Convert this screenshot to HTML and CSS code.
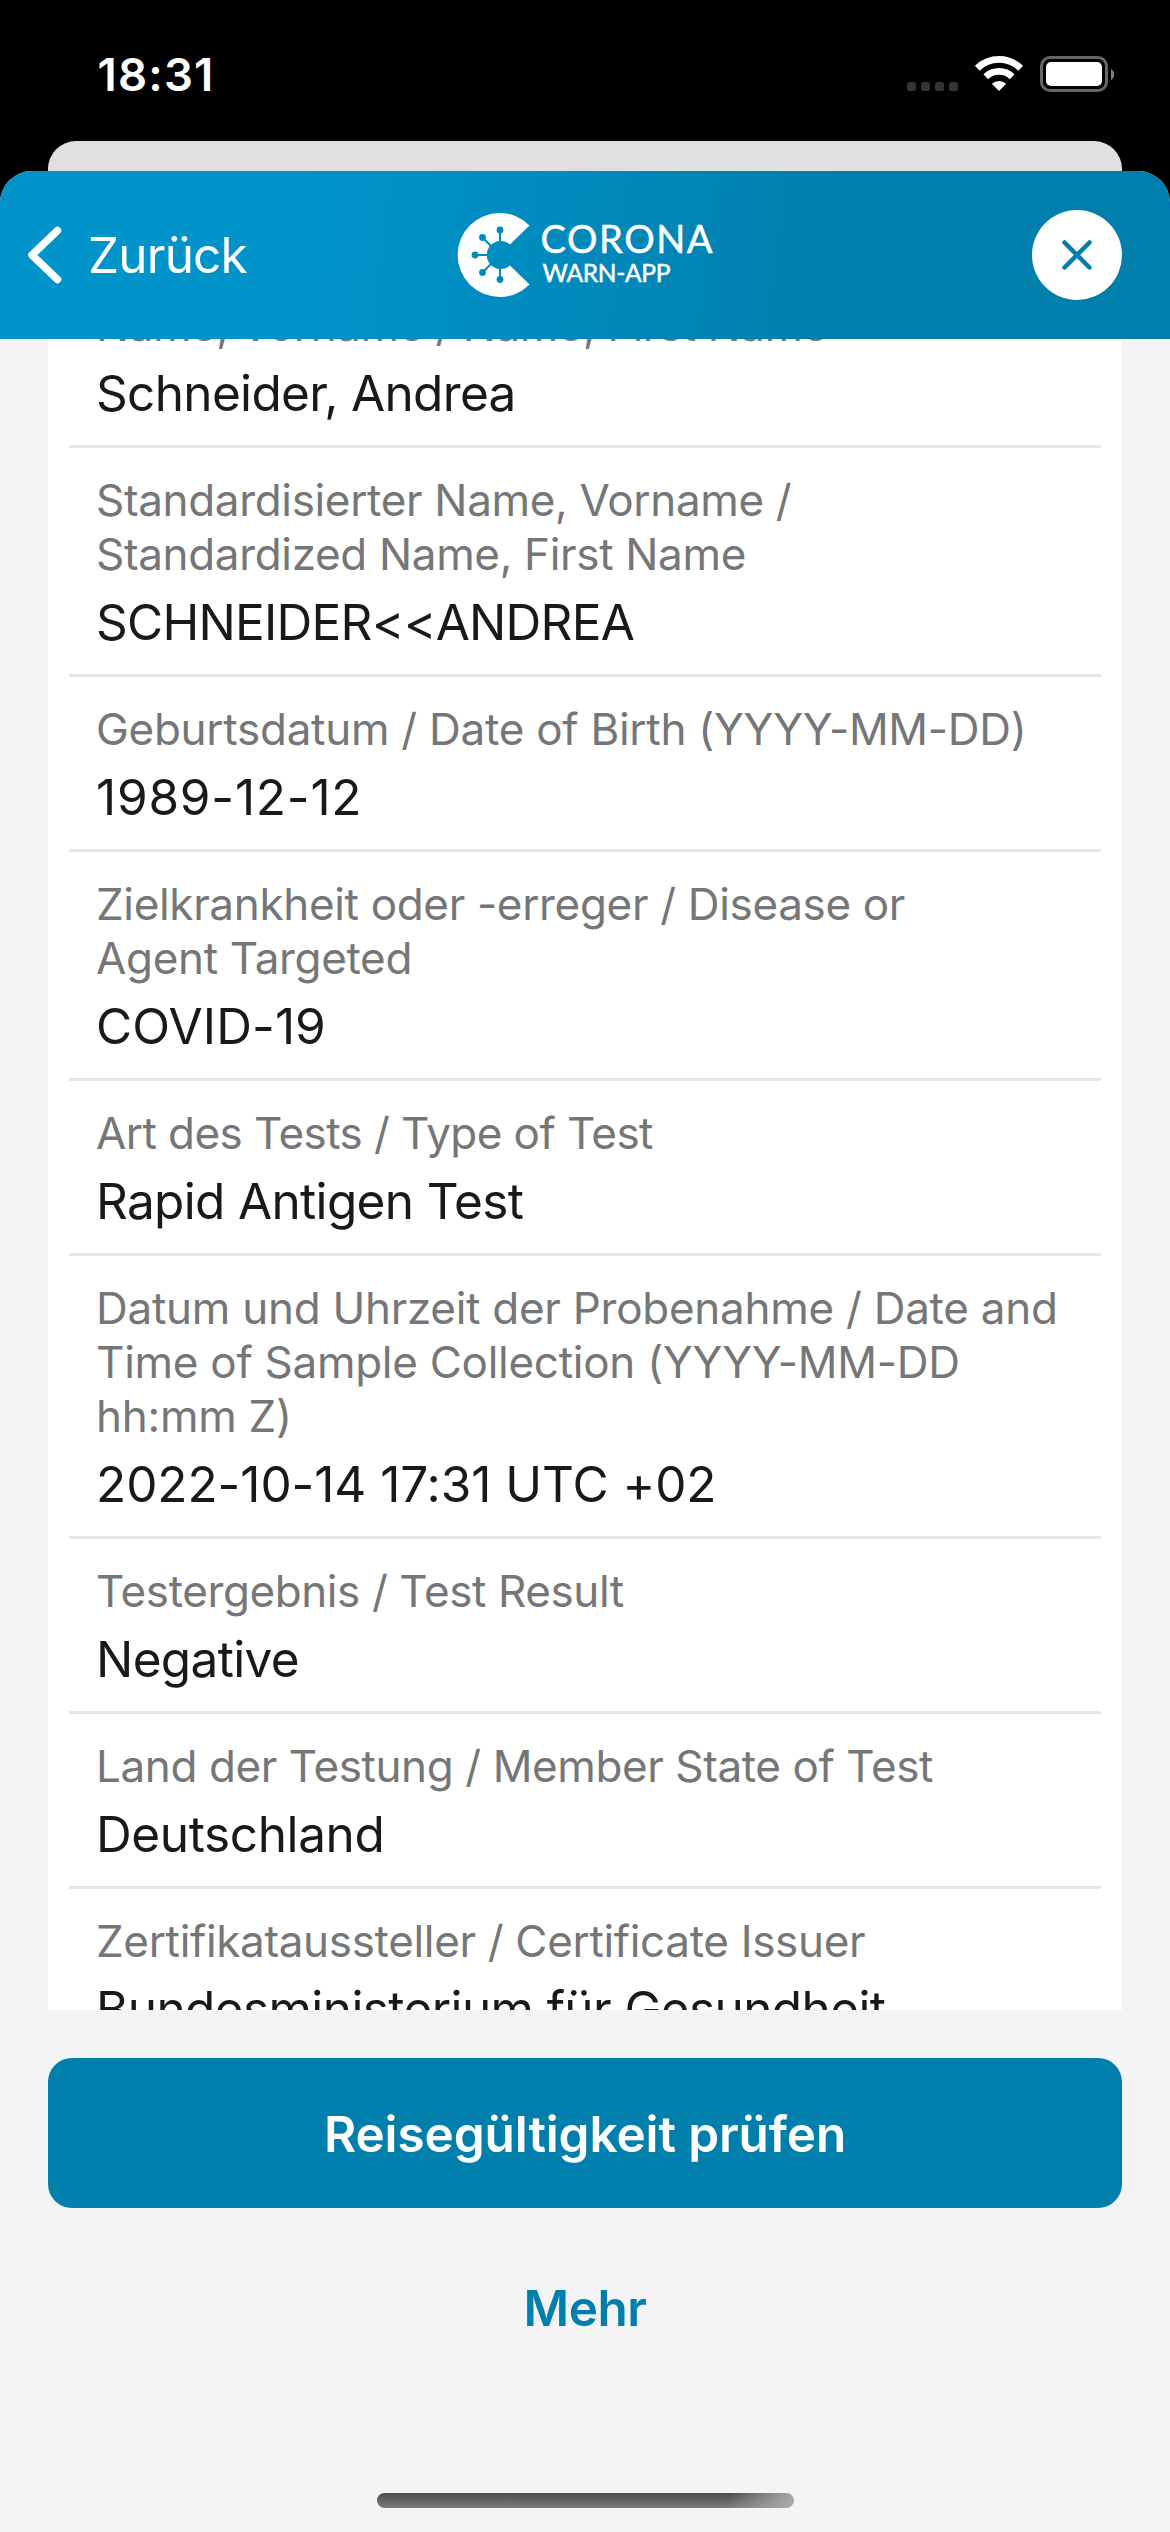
FILE: index.html
```html
<!DOCTYPE html>
<html lang="de">
<head>
<meta charset="utf-8">
<title>Corona-Warn-App</title>
<link rel="stylesheet" href="styles.css">
</head>
<body>
<div class="screen">
  <header class="status-bar">
    <span class="time">18:31</span>
    <svg class="status-icons" width="210" height="40" viewBox="0 0 210 40">
      <g fill="#323333"><rect x="2" y="28" width="9" height="9" rx="2.6"/><rect x="16" y="28" width="9" height="9" rx="2.6"/><rect x="30" y="28" width="9" height="9" rx="2.6"/><rect x="44" y="28" width="9" height="9" rx="2.6"/></g>
      <g fill="none" stroke="#fff" stroke-width="6.8">
        <path d="M72.3 14.3a31 31 0 0 1 43.4 0"/>
        <path d="M80.8 22.8a19 19 0 0 1 26.4 0"/>
      </g>
      <path fill="#fff" d="M94 37l-7.2-7.3a10.6 10.6 0 0 1 14.4 0z"/>
      <rect x="136.5" y="3.5" width="65" height="33" rx="8.5" fill="none" stroke="#666" stroke-width="3"/>
      <rect x="141" y="8" width="56" height="24" rx="5" fill="#fff"/>
      <path fill="#808080" d="M206 15a6.4 6.4 0 0 1 0 11z"/>
    </svg>
  </header>

  <div class="sheet-behind"></div>

  <main class="sheet">
    <nav class="nav-bar">
      <a class="back">
        <svg width="34" height="58" viewBox="0 0 34 58"><path d="M29.5 4.5L4 29l25.5 24.5" fill="none" stroke="#fff" stroke-width="7.5" stroke-linecap="round" stroke-linejoin="round"/></svg>
        <span>Zurück</span>
      </a>
      <svg class="logo" width="256" height="84" viewBox="0 0 256 84">
        <path fill="#fff" d="M71.5 12.5A42 42 0 1 0 71.5 71.5L52 52.5A14 14 0 1 1 52 31.5z"/>
        <g stroke="#008bbe" stroke-width="2"><path d="M42 17v12M24.500 24.500l8.500 8.500M17 42h12M24.500 59.500l8.500-8.500M42 67v-12"/></g>
        <g fill="#008bbe"><circle cx="42" cy="17" r="3.400"/><circle cx="24.500" cy="24.500" r="3.400"/><circle cx="17" cy="42" r="3.400"/><circle cx="24.500" cy="59.500" r="3.400"/><circle cx="42" cy="66.500" r="3.400"/></g>
        <text class="logo-name" x="82.500" y="40.200" textLength="172">CORONA</text>
        <text class="logo-sub" x="84.500" y="68.700" textLength="128">WARN-APP</text>
      </svg>
      <button class="close" aria-label="Schließen">
        <svg width="30" height="30" viewBox="0 0 30 30"><path d="M2.500 2.500l25 25M27.500 2.500l-25 25" stroke="#007fad" stroke-width="4.500" stroke-linecap="round"/></svg>
      </button>
    </nav>

    <section class="content">
      <dl class="details">
        <div class="row name"><dt>Name, Vorname / Name, First Name</dt><dd>Schneider, Andrea</dd></div>
        <div class="row std-name"><dt>Standardisierter Name, Vorname /<br>Standardized Name, First Name</dt><dd>SCHNEIDER&lt;&lt;ANDREA</dd></div>
        <div class="row birth"><dt>Geburtsdatum / Date of Birth (YYYY-MM-DD)</dt><dd>1989-12-12</dd></div>
        <div class="row disease"><dt>Zielkrankheit oder -erreger / Disease or<br>Agent Targeted</dt><dd>COVID-19</dd></div>
        <div class="row type"><dt>Art des Tests / Type of Test</dt><dd>Rapid Antigen Test</dd></div>
        <div class="row sample"><dt>Datum und Uhrzeit der Probenahme / Date and<br>Time of Sample Collection (YYYY-MM-DD<br>hh:mm Z)</dt><dd>2022-10-14 17:31 UTC +02</dd></div>
        <div class="row result"><dt>Testergebnis / Test Result</dt><dd>Negative</dd></div>
        <div class="row country"><dt>Land der Testung / Member State of Test</dt><dd>Deutschland</dd></div>
        <div class="row issuer"><dt>Zertifikataussteller / Certificate Issuer</dt><dd>Bundesministerium für Gesundheit</dd></div>
      </dl>
    </section>

    <footer class="actions">
      <button class="btn primary">Reisegültigkeit prüfen</button>
      <button class="btn plain">Mehr</button>
      <div class="home-indicator"></div>
    </footer>
  </main>
</div>
</body>
</html>
```
FILE: styles.css
```css
* { box-sizing: border-box; }

body {
  margin: 0;
  background: #000;
  font-family: Inter, "Liberation Sans", sans-serif;
}

.screen {
  display: flex;
  flex-direction: column;
  width: 1170px;
  height: 2532px;
  overflow: hidden;
  background: #000;
}

/* Status bar */
.status-bar {
  display: flex;
  flex: none;
  justify-content: space-between;
  align-items: flex-start;
  height: 141px;
  padding: 46px 55px 0 97.500px;
}
.time {
  color: #fff;
  font-size: 45.500px;
  font-weight: 600;
  line-height: 57px;
  letter-spacing: 1.200px;
}
.status-icons { margin-top: 8px; }

/* Stacked sheets */
.sheet-behind {
  flex: none;
  height: 30px;
  margin: 0 48px;
  border-radius: 28px 28px 0 0;
  background: #e0e0e0;
}
.sheet {
  display: flex;
  flex: 1;
  flex-direction: column;
  min-height: 0;
  border-radius: 32px 32px 0 0;
  background: #f4f4f4;
  overflow: hidden;
}

/* Navigation bar */
.nav-bar {
  display: grid;
  flex: none;
  grid-template-columns: 1fr 256px 1fr;
  align-items: center;
  height: 168px;
  padding: 0 48px 0 28px;
  background: linear-gradient(97deg, #0094cb 26%, #007fad 72%);
}
.back {
  display: flex;
  align-items: center;
  gap: 26px;
  color: #fff;
  font-size: 49.500px;
  letter-spacing: -.8px;
}
.logo { margin-left: 11px; overflow: visible; }
.logo text {
  fill: #fff;
  stroke: #fff;
  stroke-width: .5px;
  font-family: Lato, sans-serif;
}
.logo-name { font-size: 38px; }
.logo-sub { font-size: 24.500px; }
.close {
  display: flex;
  justify-content: center;
  align-items: center;
  justify-self: end;
  width: 90px;
  height: 90px;
  padding: 0;
  border: 0;
  border-radius: 50%;
  background: #fff;
}

/* Certificate details */
.content {
  flex: none;
  height: 1671px;
  margin: 0 48px;
  background: #fff;
  overflow: hidden;
}
.details { margin: -66px 21px 0; }
.row {
  padding: 25px 27px 21px;
  border-bottom: 3px solid #e6e6e6;
  white-space: nowrap;
}
dt {
  color: #757677;
  font-size: 44px;
  line-height: 54px;
  letter-spacing: -.33px;
}
dd {
  margin: 11px 0 0;
  color: #17191a;
  font-size: 49.500px;
  line-height: 61px;
  letter-spacing: -.66px;
}
.name dt { letter-spacing: -.47px; }
.std-name dd { letter-spacing: -.75px; }
.birth dt, .sample dt { letter-spacing: -.27px; }
.birth dd { letter-spacing: .8px; }
.disease dd { letter-spacing: .1px; }
.type dt { letter-spacing: -.57px; }
.sample dd { letter-spacing: -.05px; }
.result dt, .country dt { letter-spacing: -.4px; }
.country dd { letter-spacing: -.38px; }
.issuer dd { letter-spacing: -.6px; }

/* Footer */
.actions {
  display: flex;
  flex: 1;
  flex-direction: column;
  align-items: stretch;
  padding: 48px 48px 24px;
}
.btn {
  height: 150px;
  padding: 1px 0 0;
  border: 0;
  border-radius: 24px;
  font: 600 49.500px/60px Inter, sans-serif;
  letter-spacing: -.1px;
}
.primary { background: #007fad; color: #fff; }
.plain {
  margin-top: 24px;
  background: transparent;
  color: #007fad;
  letter-spacing: -.5px;
}
.home-indicator {
  align-self: center;
  width: 417px;
  height: 15px;
  margin-top: auto;
  border-radius: 8px;
  background:
    linear-gradient(105deg, transparent 84%, #a8aaa9 99%),
    linear-gradient(#4c4c4c, #7c7c7c);
}
```
